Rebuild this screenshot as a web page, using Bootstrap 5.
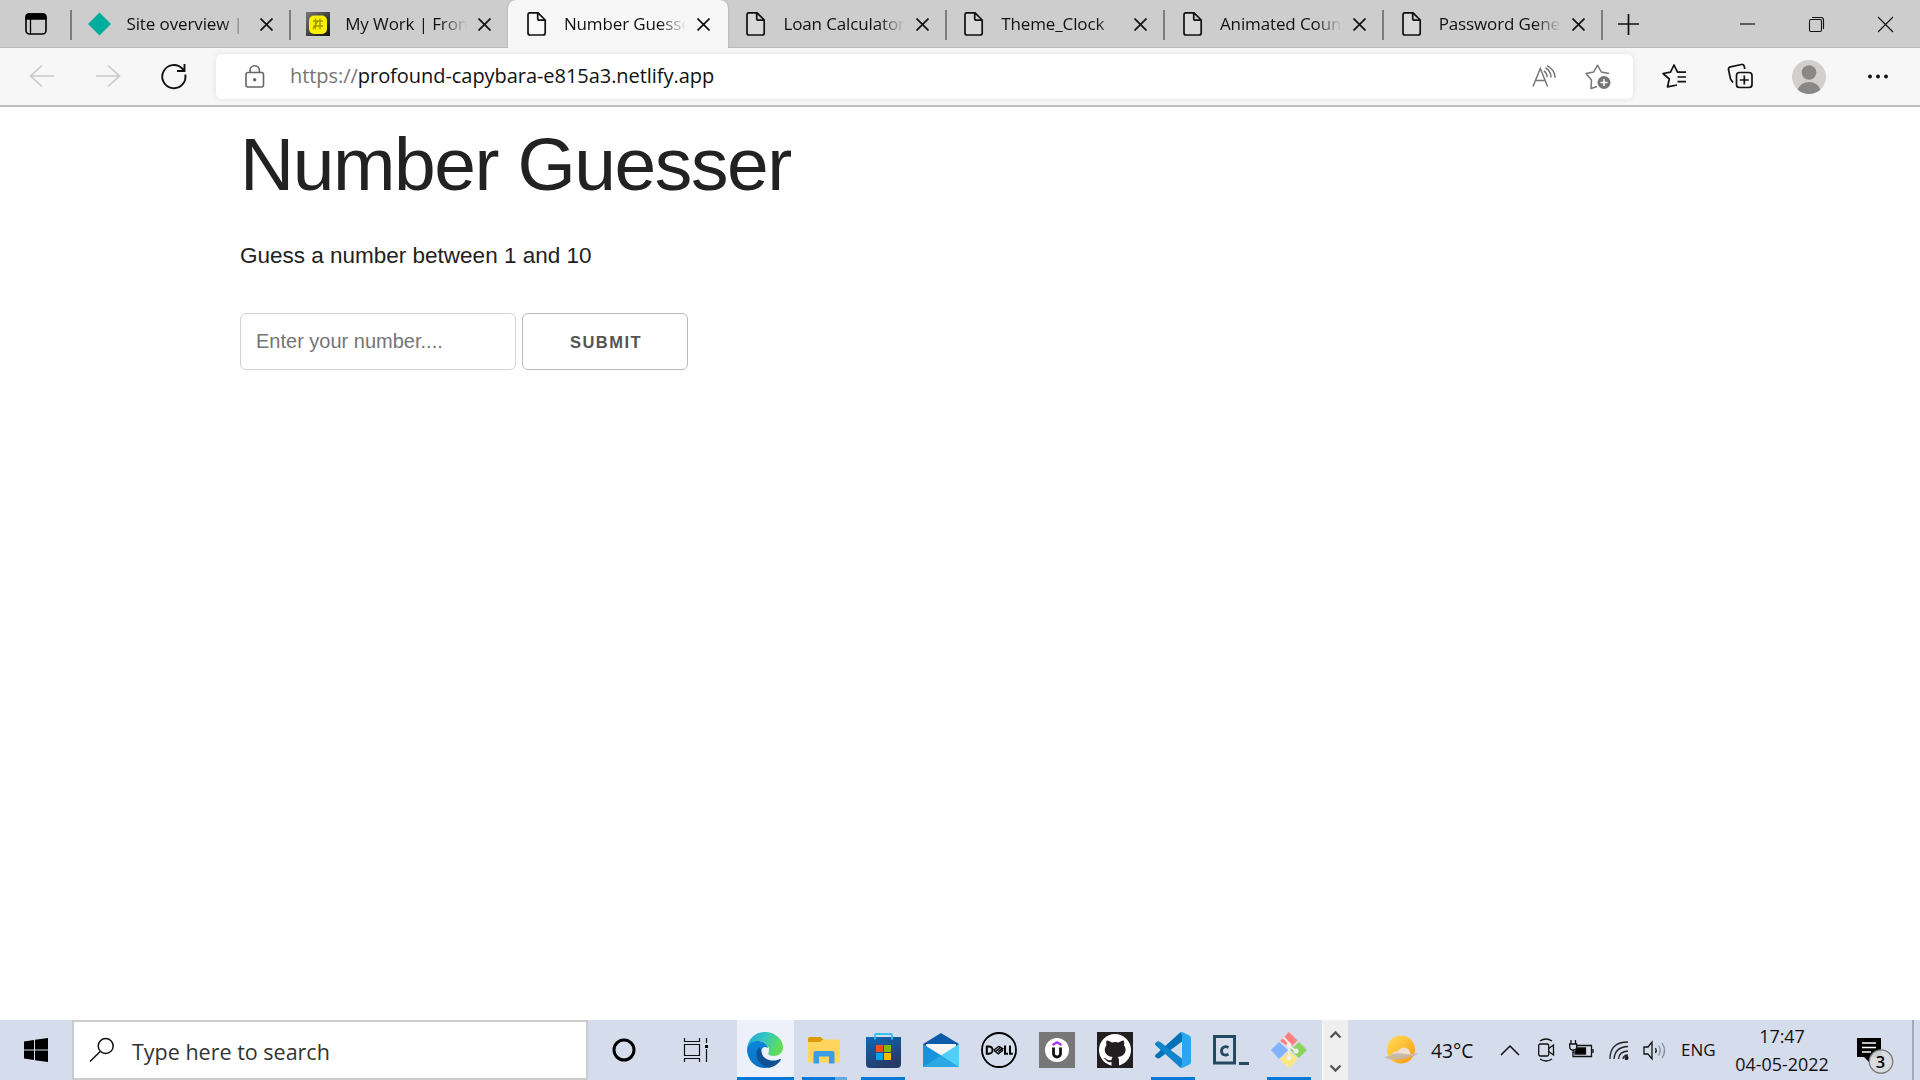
<!DOCTYPE html>
<html lang="en">
<head>
<meta charset="utf-8">
<meta name="viewport" content="width=device-width, initial-scale=1">
<title>Number Guesser</title>
<link href="https://cdn.jsdelivr.net/npm/bootstrap@5.3.0/dist/css/bootstrap.min.css" rel="stylesheet">
<style>
  body { font-family: "Open Sans", "Noto Sans", sans-serif; color: #111; height: 1080px; overflow: hidden; }
  svg { display: block; flex: none; overflow: visible; }
  /* tab strip */
  .tabstrip { height: 48px; background: #cdcdcd; box-shadow: inset 0 -1px 0 #b9b9b9; }
  .tab-actions { width: 71px; padding-left: 25px; flex: none; }
  .tab-item { width: 218.7px; height: 48px; padding-left: 16.5px; position: relative; font-size: 17px; flex: none; }
  .tab-item.divided::before { content: ""; position: absolute; left: -1px; top: 10px; width: 2px; height: 30px; background: #7d7d7d; }
  .tab-fav { width: 24px; margin-right: 15px; flex: none; }
  .tab-title { width: 122px; flex: none; overflow: hidden; white-space: nowrap; line-height: 48px; height: 48px; letter-spacing: -.12px;
    -webkit-mask-image: linear-gradient(90deg, #000 78%, transparent 100%); mask-image: linear-gradient(90deg, #000 78%, transparent 100%); }
  .tab-close { margin-left: 11px; margin-top: 1px; }
  .tab-item.current { background: #f7f7f7; border-radius: 8px 8px 0 0; box-shadow: 0 0 2px #999; clip-path: inset(0 -4px 0 -4px); width: 220px; }
  .tab-item.current + .tab-item { width: 217.4px; padding-left: 16px; }
  .tab-new { height: 48px; padding-left: 16.5px; position: relative; }
  .tab-new::before { content: ""; position: absolute; left: -1px; top: 10px; width: 2px; height: 30px; background: #7d7d7d; }
  .win-btn { width: 69px; height: 48px; flex: none; }
  /* toolbar */
  .toolbar { height: 59px; background: #f7f7f7; border-bottom: 2px solid #bfbfbf; }
  .address { width: 1417px; height: 45px; background: #fff; border-radius: 6px; box-shadow: 0 0 6px rgba(0,0,0,.09); font-size: 20px; padding: 0 22px 0 29px; }
  .url { margin-left: 25px; line-height: 44px; height: 45px; white-space: nowrap; letter-spacing: -.05px; }
  .url span { color: #767676; }
  .add-star { margin-left: 29px; }
  /* page */
  .page { height: 913px; font-family: "Liberation Sans", Arial, sans-serif; color: #222; padding: 12px 0 0 240px; }
  .page h1 { font-size: 75px; letter-spacing: -1.45px; line-height: 90px; font-weight: 400; margin: 0 0 29px; }
  .page p { font-size: 22.5px; line-height: 36px; margin: 0 0 39px; }
  .guess-form { gap: 6px; }
  .guess { width: 276px; height: 57px; border: 1px solid #d1d1d1; border-radius: 6px; padding: 9px 15px; font-size: 20px; }
  .guess::placeholder { color: #757575; opacity: 1; }
  .send { width: 166px; height: 57px; border: 1px solid #bbb; border-radius: 6px; color: #555; font-size: 16.5px; font-weight: 700; letter-spacing: 1.5px; padding: 2px 0 0 2px; }
  /* taskbar */
  .taskbar { height: 60px; background: #d5dceb; }
  .start { width: 72px; flex: none; }
  .finder { width: 516px; height: 60px; background: #fff; border: 2px solid #ccc; padding-left: 16px; font-size: 21.5px; color: #333; flex: none; }
  .finder span { margin-left: 18px; line-height: 54px; height: 54px; margin-top: 3px; }
  .cortana { width: 72px; flex: none; }
  .taskview { width: 77px; padding-left: 24px; flex: none; }
  .app { width: 58px; height: 60px; position: relative; flex: none; }
  .app.open::after { content: ""; position: absolute; bottom: 0; left: 7px; width: 44px; height: 3px; background: #0078d7; }
  .app.focused { background: #edf1f9; width: 57px; margin-right: 2px; padding-right: 2px; }
  .app.focused::after { left: 0; width: 57px; }
  .app.multi { padding-right: 2px; }
  .app.multi::after { background: linear-gradient(90deg, #0078d7 74%, #63abe6 74%); width: 45px; left: 6px; }
  .scroller { width: 26px; height: 60px; background: #efefef; border-left: 1px solid #fff; padding: 11px 0 8px; margin-left: 4px; flex: none; }
  .tray { font-size: 17px; color: #111; white-space: nowrap; }
  .weather-icon { margin-left: 36px; }
  .temp { width: 82px; padding: 3px 0 0 13px; font-size: 19.3px; }
  .lang { width: 53px; padding-left: 15px; }
  .clock { width: 110px; line-height: 28px; font-size: 17.9px; text-align: center; margin-left: 8px; }
  .notify { margin-left: 20px; }
  .edge-line { width: 2px; height: 60px; background: #a3a9b6; margin-right: 6px; }
</style>
<script src="https://cdn.jsdelivr.net/npm/bootstrap@5.3.0/dist/js/bootstrap.bundle.min.js"></script>
</head>
<body class="d-flex flex-column bg-white m-0">
<svg width="0" height="0" class="position-absolute">
  <symbol id="doc" viewBox="0 0 24 24"><path d="M5 .8H13L20.200 8V21a2 2 0 0 1-2 2H5a2 2 0 0 1-2-2V2.800a2 2 0 0 1 2-2ZM12.700 1V6.500a1.700 1.700 0 0 0 1.700 1.700H20" fill="#fff" fill-opacity=".25" stroke="#111" stroke-width="1.700"/></symbol>
  <symbol id="cross" viewBox="0 0 13 13"><path d="M.5.500l12 12M12.500.500l-12 12" stroke="#111" stroke-width="1.700"/></symbol>
</svg>

<header class="tabstrip d-flex align-items-center">
  <div class="tab-actions"><svg width="22" height="22" viewBox="0 0 22 22"><rect x="1" y="1" width="20" height="20" rx="3.500" fill="none" stroke="#000" stroke-width="1.600"/><path d="M1 6V4a3 3 0 0 1 3-3H18a3 3 0 0 1 3 3V6ZM5.500 6v15" stroke="#000" stroke-width="1.300"/></svg></div>
  <div class="tab-item divided d-flex align-items-center"><span class="tab-fav"><svg width="24" height="24" viewBox="0 0 24 24"><path d="M11.500.500 23 12 11.500 23.500 0 12Z" fill="#00ad9f"/></svg></span><span class="tab-title">Site overview | </span><svg class="tab-close" width="13" height="13"><use href="#cross"/></svg></div>
  <div class="tab-item divided d-flex align-items-center"><span class="tab-fav"><svg width="24" height="24" viewBox="0 0 24 24"><defs><linearGradient id="fg" x2="1" y2="1"><stop stop-color="#777"/><stop offset="1" stop-color="#111"/></linearGradient></defs><path fill="url(#fg)" d="M0 0h24v24H0z"/><rect x="3" y="3.500" width="18" height="18.500" rx="5" fill="#fbf000"/><path d="M7 9h10M7 14h10M9.500 6.500v11M14 6.500v11M7 17l5-8" stroke="#a09800" stroke-width="1.300"/></svg></span><span class="tab-title">My Work | Fron</span><svg class="tab-close" width="13" height="13"><use href="#cross"/></svg></div>
  <div class="tab-item current d-flex align-items-center"><span class="tab-fav"><svg width="24" height="24"><use href="#doc"/></svg></span><span class="tab-title">Number Guesser</span><svg class="tab-close" width="13" height="13"><use href="#cross"/></svg></div>
  <div class="tab-item d-flex align-items-center"><span class="tab-fav"><svg width="24" height="24"><use href="#doc"/></svg></span><span class="tab-title">Loan Calculator</span><svg class="tab-close" width="13" height="13"><use href="#cross"/></svg></div>
  <div class="tab-item divided d-flex align-items-center"><span class="tab-fav"><svg width="24" height="24"><use href="#doc"/></svg></span><span class="tab-title">Theme_Clock</span><svg class="tab-close" width="13" height="13"><use href="#cross"/></svg></div>
  <div class="tab-item divided d-flex align-items-center"><span class="tab-fav"><svg width="24" height="24"><use href="#doc"/></svg></span><span class="tab-title">Animated Coun</span><svg class="tab-close" width="13" height="13"><use href="#cross"/></svg></div>
  <div class="tab-item divided d-flex align-items-center"><span class="tab-fav"><svg width="24" height="24"><use href="#doc"/></svg></span><span class="tab-title">Password Gene</span><svg class="tab-close" width="13" height="13"><use href="#cross"/></svg></div>
  <div class="tab-new d-flex align-items-center flex-fill"><svg width="21" height="21" viewBox="0 0 21 21"><path d="M10.500 0v21M0 10h21" stroke="#111" stroke-width="1.700"/></svg></div>
  <div class="win-btn d-flex align-items-center justify-content-center"><svg width="15" height="15"><path d="M0 7h15" stroke="#111" stroke-width="1.200"/></svg></div>
  <div class="win-btn d-flex align-items-center justify-content-center"><svg width="15" height="15" fill="none" stroke="#111" stroke-width="1.100"><rect x=".5" y="2.500" width="12" height="12" rx="1.500"/><path d="M3 .5h9a2.500 2.500 0 0 1 2.500 2.500v9"/></svg></div>
  <div class="win-btn d-flex align-items-center justify-content-center"><svg width="15" height="15"><path d="M0 0l15 15M15 0L0 15" stroke="#111" stroke-width="1.200"/></svg></div>
</header>

<nav class="toolbar d-flex align-items-center">
  <svg width="216" height="57" viewBox="0 0 216 57" fill="none" stroke-width="1.600"><path d="M54 28H30.500M42 17.500 30.500 28 42 38.500M96 28h23.500M108 17.500 119.500 28 108 38.500" stroke="#c9c9c9"/><path d="M185.300 26.500A11.600 11.600 0 1 1 182.200 20.500L184.500 23M184.500 16v7h-7.500" stroke="#111" stroke-width="1.900"/></svg>
  <div class="address d-flex align-items-center">
    <svg width="20" height="24" viewBox="0 0 20 24" fill="none" stroke="#666" stroke-width="1.600"><rect x="1" y="7.500" width="17.500" height="14.500" rx="2"/><path d="M5 7.500V5.500a4.700 4.700 0 0 1 9.400 0v2"/><circle cx="9.700" cy="14.700" r="1.700" fill="#666" stroke="none"/></svg>
    <div class="url flex-fill"><span>https://</span>profound-capybara-e815a3.netlify.app</div>
    <svg width="24" height="24" viewBox="0 0 24 24" fill="none" stroke="#767676" stroke-width="1.500"><path d="M1 21.500 8.300 3.500 15.600 21.500M3.500 15.500h9.600M12 5.800q3 2 3.200 6.500M13.500 3q5.500 3 5.500 9.500M15 .7q8 4 8 12"/></svg>
    <svg class="add-star" width="26" height="26" viewBox="0 0 26 26"><path d="M12 22.500 6 24.500 6.500 16 1 9.500 8.700 8 12.500 1.200 16.300 8 24 9.500" fill="none" stroke="#767676" stroke-width="1.500" stroke-linejoin="round"/><circle cx="19" cy="18.500" r="6.500" fill="#767676"/><path d="M19 15v7M15.500 18.500h7" stroke="#fff" stroke-width="1.500"/></svg>
  </div>
  <svg width="287" height="57" viewBox="0 0 287 57" fill="none" stroke="#111" stroke-width="1.700">
    <path d="M44 37 34.500 38.800 36.300 31 30 25.500 37.500 24.200 41 17 44.500 24.200H53M44.500 29H53M44.500 33.700H53" stroke-linejoin="round"/>
    <rect x="103.500" y="24.500" width="15.500" height="15" rx="3"/><path d="M111.300 27.500v9M106.800 32h9M100 34.500l-2.500-3.500-2-9.500a2.500 2.500 0 0 1 2-2.700l11-2.300a2.500 2.500 0 0 1 2.800 2l.5 2.500"/>
    <circle cx="176" cy="29" r="17" fill="#d2d0ce" stroke="none"/><circle cx="176" cy="24.500" r="7.300" fill="#8a8886" stroke="none"/><path d="M164.500 41.500a12.500 12.500 0 0 1 23 0 17 17 0 0 1-23 0Z" fill="#8a8886" stroke="none"/>
    <g fill="#111" stroke="none"><circle cx="237" cy="28.500" r="1.900"/><circle cx="245" cy="28.500" r="1.900"/><circle cx="253" cy="28.500" r="1.900"/></g>
  </svg>
</nav>

<main class="page">
  <h1>Number Guesser</h1>
  <p>Guess a number between 1 and 10</p>
  <form class="guess-form d-flex"><input class="guess" type="text" placeholder="Enter your number...."><button class="send btn bg-white" type="button">SUBMIT</button></form>
</main>

<footer class="taskbar d-flex align-items-center">
  <div class="start d-flex justify-content-center"><svg width="24" height="24" viewBox="0 0 24 24"><path d="M0 3.500 10 2v9.500H0ZM11 1.800 24 0v11.500H11ZM0 12.500h10V22L0 20.500ZM11 12.500h13V24l-13-1.800Z"/></svg></div>
  <div class="finder d-flex align-items-center"><svg width="24" height="24" viewBox="0 0 24 24" fill="none" stroke="#111" stroke-width="1.500"><circle cx="15.700" cy="8" r="7.500"/><path d="M10.200 13.500 0 23.500"/></svg><span>Type here to search</span></div>
  <div class="cortana d-flex justify-content-center"><svg width="24" height="24"><circle cx="12" cy="12" r="10" fill="none" stroke="#000" stroke-width="3"/></svg></div>
  <div class="taskview d-flex align-items-center"><svg width="24" height="24" fill="none" stroke="#111" stroke-width="1.200"><path d="M.5 0v3.500h15V0M.5 6.500h15v11H.5ZM.5 24v-3.500h15V24M22.500 0v5M22.500 11v13"/><path d="M21 7h3v3h-3z" fill="#000" stroke="none"/></svg></div>

  <div class="app open focused d-flex align-items-center justify-content-center"><svg width="36" height="36" viewBox="0 0 36 36">
    <defs><linearGradient id="eg" x2="1" y2=".35"><stop stop-color="#24a4df"/><stop offset=".5" stop-color="#32c6c5"/><stop offset="1" stop-color="#62dc56"/></linearGradient><linearGradient id="eb" x2="0" y2="1"><stop stop-color="#0b86d8"/><stop offset="1" stop-color="#0c70c5"/></linearGradient></defs>
    <path d="M0 17C1 6 9 0 18 0c11 0 18 8 18 15 0 6-4.500 9-9.500 9-4 0-6-1.500-5-3.500 1.200-2.500.7-7-4.500-10C11 7 3 10 0 17Z" fill="url(#eg)"/>
    <path d="M0 17C2 10 7 8.500 12 9c5 .5 9 4 9 7-4-3-8 1-7 6 1 6 8 9 18 6-3 5-8 8-14 8C7 36 0 27 0 17Z" fill="url(#eb)"/>
    <path d="M12.500 15c-6 5-3 18 9.500 20.700 5-.7 9.500-4 12-8-.2-1-1-.8-2-.3C23 31 14 26 14.500 18.500Z" fill="#114f96"/></svg></div>
  <div class="app open multi d-flex align-items-center justify-content-center"><svg width="32" height="27" viewBox="0 0 32 27"><path d="M0 1.500A1.500 1.500 0 0 1 1.500 0h11L16 3v5H0Z" fill="#dc9b08"/><path d="M0 5h12l3-2.500h15.500A1.500 1.500 0 0 1 32 4v20a1.500 1.500 0 0 1-1.500 1.500h-29A1.500 1.500 0 0 1 0 24Z" fill="#ffd55d"/><path d="M5.500 26.500V16a2 2 0 0 1 2-2h17a2 2 0 0 1 2 2v10.500H21v-7H11v7Z" fill="#3b9be4"/></svg></div>
  <div class="app open d-flex align-items-center justify-content-center"><svg width="35" height="36" viewBox="0 0 35 36"><defs><linearGradient id="sg" x2=".5" y2="1"><stop stop-color="#0b69bd"/><stop offset="1" stop-color="#263b66"/></linearGradient></defs><path d="M0 5h35v27a4 4 0 0 1-4 4H4a4 4 0 0 1-4-4Z" fill="url(#sg)"/><path d="M9 7.500V3a1 1 0 0 1 1-1h15a1 1 0 0 1 1 1v4.500" fill="none" stroke="#35c0f4" stroke-width="1.800"/><path d="M10 13h7v7h-7z" fill="#f25022"/><path d="M18 13h7v7h-7z" fill="#7fba00"/><path d="M10 21h7v7h-7z" fill="#00a4ef"/><path d="M18 21h7v7h-7z" fill="#ffb900"/></svg></div>
  <div class="app d-flex align-items-center justify-content-center"><svg width="36" height="34" viewBox="0 0 36 34"><path d="M0 11 18 0l18 11v8H0Z" fill="#0c5ba8"/><path d="M3 11h30v3L18 24 3 14Z" fill="#f4f4f4"/><path d="M0 11 19 23 36 34H0Z" fill="#1894dc"/><path d="M36 11 18 22.500 36 34Z" fill="#4fd0f5"/><path d="M0 34 18 22.500 36 34Z" fill="#2ba9e6"/></svg></div>
  <div class="app d-flex align-items-center justify-content-center"><svg width="36" height="36" viewBox="0 0 36 36" fill="none" stroke="#000"><circle cx="18" cy="18" r="17" stroke-width="1.800"/><path d="M5.800 14.500v7.200h2.200a3.600 3.600 0 0 0 0-7.200ZM24 13.500v8.200h3M29 13.500v8.200h2.800" stroke-width="2"/><path d="M12.800 18.200l5.200-3.900M14 19.800l5.200-3.800M12.800 18.200l4.500 3.600 4.700-3.500M18 14.300l3.700 2.400-4.500 3" stroke-width="1.400"/></svg></div>
  <div class="app d-flex align-items-center justify-content-center"><svg width="36" height="36" viewBox="0 0 36 36"><path fill="#777" d="M0 0h36v36H0z"/><circle cx="18" cy="18" r="12" fill="#fff"/><path d="M13.500 13 18 10.300 22.500 13" fill="none" stroke="#a435f0" stroke-width="2.400"/><path d="M14.500 15.500v6a3.500 3.500 0 0 0 7 0v-6" fill="none" stroke="#111" stroke-width="2.800"/></svg></div>
  <div class="app d-flex align-items-center justify-content-center"><svg width="36" height="36" viewBox="0 0 36 36"><path fill="#231f20" d="M0 0h36v36H0z"/><circle cx="18" cy="18" r="16" fill="#fff"/><path d="M14.500 36v-6c-5 1-5.500-3-8-4 3-.5 3.500 3.500 8 2 .1-1.500.6-2.300 1.200-3-8-1-9.700-7-6.200-12-.6-2-.3-3.500.2-4.500 2 0 3.500 1 5 2a14 14 0 0 1 7 0c1.500-1 3-2 5-2 .5 1 .8 2.500.2 4.500 3.500 5 1.800 11-6.200 12 .8 1 1.300 2 1.300 4v7Z" fill="#231f20"/></svg></div>
  <div class="app open d-flex align-items-center justify-content-center"><svg width="36" height="36" viewBox="0 0 36 36"><path d="M0 11.500 2.500 9.500 4.500 9.700 27 26.500V35.500Q25 36 24 34.500L.3 13Z" fill="#1284cb"/><path d="M0 24.500 2.500 26.500 4.500 26.300 27 9.500V.500Q25 0 24 1.500L.3 23Z" fill="#0070b8"/><path d="M0 11.500 2.500 9.500 4.500 9.700 16 18.300 10 22Z" fill="#1284cb"/><path d="M25 35.500Q27 34 27 32V4Q27 2 25 .5L27 0 34.500 3.500Q36 4.500 36 6V30Q36 31.500 34.500 32.500L27 36Z" fill="#28a7f2"/></svg></div>
  <div class="app d-flex align-items-center justify-content-center"><svg width="36" height="30" viewBox="0 0 36 30"><path d="M1.500 1.500h20v26.500h-20z" fill="none" stroke="#244a62" stroke-width="3"/><path d="M15.500 12.500c-3.500-1.800-7-.3-7 3.500s3.500 5 7 3.300" fill="none" stroke="#244a62" stroke-width="2.800"/><path d="M26 27h10v3H26z" fill="#244a62"/></svg></div>
  <div class="app open d-flex align-items-center justify-content-center"><svg width="36" height="36" viewBox="0 0 36 36"><path d="M9 9 18 0 26.500 8.500 19 16Z" fill="#ff8080"/><path d="M8 10 17 18 8 27 0 18Z" fill="#80b3ff"/><path d="M28 10 36 18 28 26 19.500 18Z" fill="#8cd35f"/><path d="M18 19 27 27 18 36 9 27.500Z" fill="#ffe680"/><path d="M12 5l6 6v15M18 14l7 5" fill="none" stroke="#eef0ef" stroke-width="1.800"/><circle cx="18" cy="13" r="2.500" fill="#eef0ef"/><circle cx="25" cy="19" r="2.500" fill="#eef0ef"/><circle cx="18" cy="26" r="2.500" fill="#eef0ef"/></svg></div>
  <div class="scroller d-flex flex-column justify-content-between align-items-center"><svg width="11" height="7"><path d="M.5 6.500l5-5 5 5" fill="none" stroke="#555" stroke-width="2.300"/></svg><svg width="11" height="7"><path d="M.5.500l5 5 5-5" fill="none" stroke="#555" stroke-width="2.300"/></svg></div>

  <div class="tray d-flex align-items-center flex-fill">
    <svg class="weather-icon" width="34" height="32" viewBox="0 0 34 32"><defs><linearGradient id="wg" x2="1" y2="1"><stop stop-color="#ffe05a"/><stop offset="1" stop-color="#ff970e"/></linearGradient></defs><circle cx="17" cy="15.500" r="14" fill="url(#wg)"/><path d="M8 20q2-3 5-2 3-4.500 7.500-4.500 5 .5 6 6.500h4q0 2-10 2.500H6Q4 21 8 20Z" fill="#eedfd0"/><path d="M0 23q6-1 8-3 6-1.500 14 0 4 .5 12-.5-3 3-10 4-3 2-10 2Q4 26 0 23Z" fill="#c4b4a8" opacity=".85"/></svg>
    <span class="temp">43°C</span>
    <svg width="20" height="12"><path d="M1 11 10 2l9 9" fill="none" stroke="#111" stroke-width="1.500"/></svg>
    <svg style="margin-left:18px" width="17" height="24" viewBox="0 0 17 24" fill="none" stroke="#111" stroke-width="1.300"><rect x=".7" y="6" width="10" height="12" rx="1.500"/><path d="M10.700 10.500 15.500 7v10l-4.800-3.500M2 3q6-4 12 0M2 21q6 4 12 0"/></svg>
    <svg style="margin-left:14px" width="25" height="20" viewBox="0 0 25 20" fill="none" stroke="#111" stroke-width="1.300"><path d="M8 5.500h14.500v11H4V12M24 9v4"/><path d="M8 8h8.500v6H6V11" fill="#000"/><path d="M2 0v4M6.500 0v4M4.200 10v3"/><path d="M.7 4h7v3q0 3-3.500 3T.7 7Z" fill="#d5dceb"/></svg>
    <svg style="margin-left:15px" width="20" height="22" viewBox="0 0 20 22" fill="none" stroke="#222" stroke-width="1.300"><path d="M1 20Q1 3 19 3M5 20Q6 8 19 7.500M9.500 20Q10 12.500 19 12M14 20q.500-4 5-4"/><circle cx="17.500" cy="19" r="1.500" fill="#111"/></svg>
    <svg style="margin-left:14px" width="23" height="20" viewBox="0 0 23 20" fill="none" stroke="#111" stroke-width="1.300"><path d="M1 7h4l4-5v17l-4-5H1Z"/><path d="M12.500 8q1.500 2.500 0 5"/><path d="M15.500 5.500q3.500 5 0 10M19 3q5 7.500 0 15" stroke="#858b98"/></svg>
    <span class="lang">ENG</span>
    <div class="clock"><div>17:47</div><div>04-05-2022</div></div>
    <svg class="notify" width="36" height="40" viewBox="0 0 36 40"><path d="M0 8h24v19H13v6L7 27H0Z"/><path d="M5 13h14M5 17.500h14M5 22h9" stroke="#fff" stroke-width="1.500"/><circle cx="24" cy="31.500" r="11.700" fill="#d9dade" fill-opacity=".93" stroke="#777" stroke-width="1.300"/><text x="23.500" y="37.500" text-anchor="middle" font-size="16.500" font-weight="600">3</text></svg>
  </div>
  <div class="edge-line"></div>
</footer>
</body>
</html>
